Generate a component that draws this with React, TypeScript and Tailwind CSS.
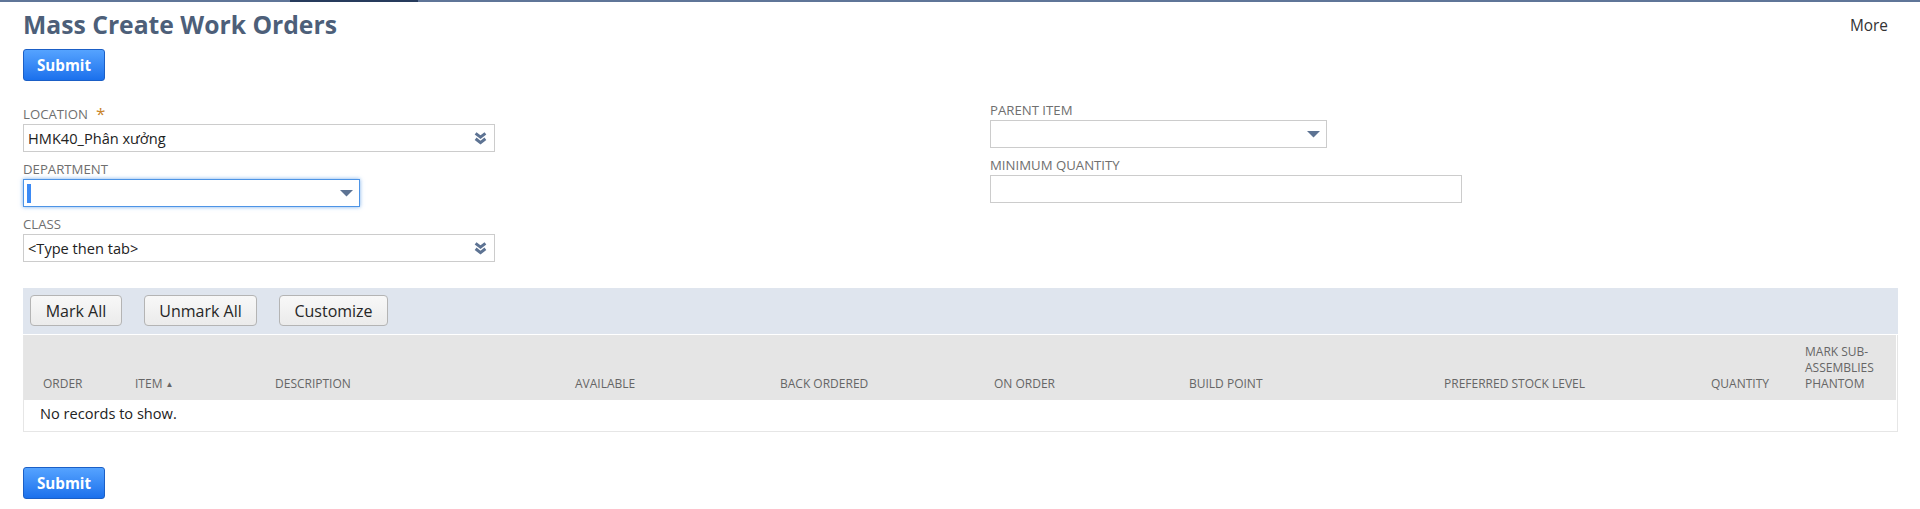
import React from "react";

const Triangle = () => (
  <svg width="13" height="7" viewBox="0 0 13 7" className="shrink-0">
    <polygon points="0,0 13,0 6.5,6.5" fill="#5d7393" />
  </svg>
);

const DoubleChevron = () => (
  <svg width="13" height="13" viewBox="0 0 13 13" className="shrink-0">
    <path d="M1.6 1.4 L6.5 5.2 L11.4 1.4" fill="none" stroke="#5d7393" strokeWidth="3" strokeLinejoin="miter" />
    <path d="M1.6 6.8 L6.5 10.6 L11.4 6.8" fill="none" stroke="#5d7393" strokeWidth="3" strokeLinejoin="miter" />
  </svg>
);

const Label = ({ children }: { children: React.ReactNode }) => (
  <div className="h-[18px] text-[13.2px] leading-[18px] uppercase text-[#6f6f6f] whitespace-nowrap">{children}</div>
);

const SubmitButton = () => (
  <button className="flex h-[32px] w-[82px] items-center justify-center rounded-[3px] border border-[#1b5fc6] bg-linear-to-b from-[#55a3ff] to-[#1a70ec] text-[15.2px] font-bold leading-[20px] text-white">
    Submit
  </button>
);

const ToolButton = ({ children, w }: { children: React.ReactNode; w: string }) => (
  <button
    className={`flex h-[31px] ${w} items-center justify-center rounded-[4px] border border-[#b4b4b4] bg-linear-to-b from-[#f8f8f8] to-[#ebebeb] text-[16px] leading-[20px] text-[#262626]`}
  >
    {children}
  </button>
);

export default function App() {
  return (
    <div className="min-h-[509px] bg-white font-['Open_Sans',sans-serif] text-[#333]">
      {/* top bar */}
      <div className="flex h-[2px] bg-[#5f7598]">
        <div className="ml-[290px] w-[128px] bg-[#263b5c]" />
      </div>

      {/* title row */}
      <div className="flex items-start justify-between pl-[23px] pr-[32px] pt-[7px]">
        <h1 className="text-[24.7px] font-bold leading-[32px] text-[#4d5f79]">Mass Create Work Orders</h1>
        <span className="mt-[7px] text-[15.4px] leading-[20px] text-[#333]">More</span>
      </div>

      <div className="mt-[8px] pl-[23px]">
        <SubmitButton />
      </div>

      {/* fields */}
      <div className="mt-[20px] flex pl-[23px]">
        <div className="w-[967px] pt-[4px]">
          <div className="flex h-[18px] items-start">
            <Label>Location</Label>
            <span className="ml-[8px] text-[17px] leading-[18px] text-[#c9852b]">*</span>
          </div>
          <div className="mt-[1px] flex h-[28px] w-[472px] items-center justify-between border border-[#cccccc] pl-[4px] pr-[7px]">
            <span className="text-[14.6px] leading-[20px] text-[#222]">HMK40_Phân xưởng</span>
            <DoubleChevron />
          </div>

          <div className="mt-[8px]">
            <Label>Department</Label>
          </div>
          <div className="mt-[1px] flex h-[28px] w-[337px] items-center justify-between border border-[#4d94e6] pl-[3px] pr-[6px] shadow-[0_0_4px_rgba(77,148,230,0.75)]">
            <div className="h-[19px] w-[4px] bg-[#3b8af5]" />
            <Triangle />
          </div>

          <div className="mt-[8px]">
            <Label>Class</Label>
          </div>
          <div className="mt-[1px] flex h-[28px] w-[472px] items-center justify-between border border-[#cccccc] pl-[4px] pr-[7px]">
            <span className="text-[14.6px] leading-[20px] text-[#222]">&lt;Type then tab&gt;</span>
            <DoubleChevron />
          </div>
        </div>

        <div>
          <Label>Parent Item</Label>
          <div className="mt-[1px] flex h-[28px] w-[337px] items-center justify-end border border-[#cccccc] pr-[6px]">
            <Triangle />
          </div>
          <div className="mt-[8px]">
            <Label>Minimum Quantity</Label>
          </div>
          <div className="mt-[1px] h-[28px] w-[472px] border border-[#cccccc]" />
        </div>
      </div>

      {/* table */}
      <div className="mt-[26px] pl-[23px] pr-[22px]">
        <div className="flex h-[47px] gap-[22px] border-b border-white bg-[#dfe5ee] pl-[7px] pt-[7px]">
          <ToolButton w="w-[92px]">Mark All</ToolButton>
          <ToolButton w="w-[113px]">Unmark All</ToolButton>
          <ToolButton w="w-[109px]">Customize</ToolButton>
        </div>
        <div className="border border-t-0 border-[#e6e6e6] pr-[1px]">
          <div className="flex h-[65px] items-end bg-[#e5e5e5] pb-[8px] text-[12px] leading-[16px] uppercase text-[#666]">
            <div className="w-[111px] shrink-0 pl-[19px]">Order</div>
            <div className="w-[140px] shrink-0">
              Item <span className="text-[8px] align-[1px]">▲</span>
            </div>
            <div className="w-[300px] shrink-0">Description</div>
            <div className="w-[205px] shrink-0">Available</div>
            <div className="w-[214px] shrink-0">Back Ordered</div>
            <div className="w-[195px] shrink-0">On Order</div>
            <div className="w-[255px] shrink-0">Build Point</div>
            <div className="w-[267px] shrink-0">Preferred Stock Level</div>
            <div className="w-[94px] shrink-0">Quantity</div>
            <div className="w-[80px] shrink-0">
              Mark Sub-
              <br />
              Assemblies
              <br />
              Phantom
            </div>
          </div>
          <div className="h-[31px] pl-[16px] pt-[3px] text-[14.6px] leading-[20px] text-[#222]">No records to show.</div>
        </div>
      </div>

      <div className="mt-[35px] pb-[10px] pl-[23px]">
        <SubmitButton />
      </div>
    </div>
  );
}
